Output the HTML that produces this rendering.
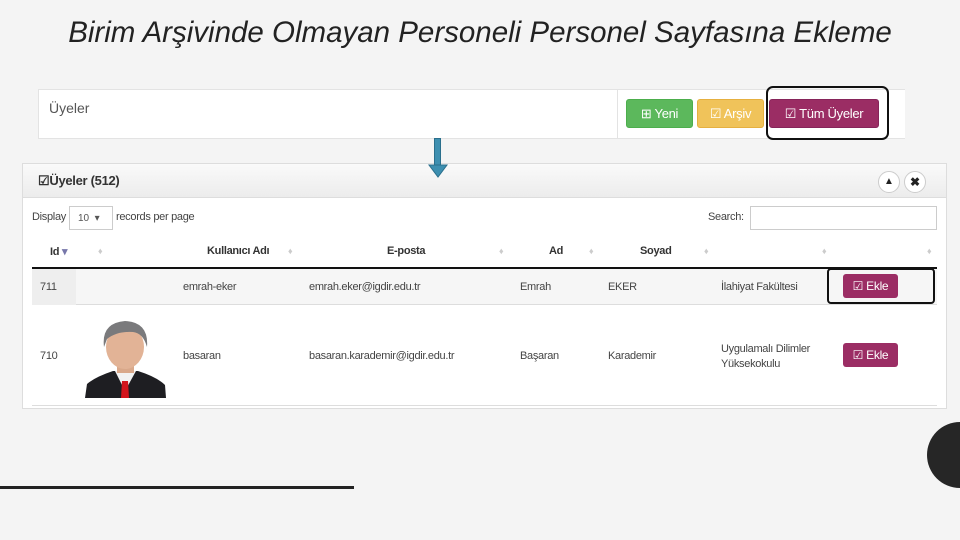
<!DOCTYPE html>
<html><head><meta charset="utf-8"><style>
*{margin:0;padding:0;box-sizing:border-box}
body{width:960px;height:540px;background:#f4f4f4;position:relative;overflow:hidden;font-family:"Liberation Sans",sans-serif;}
.a{position:absolute}
.title{left:0;width:960px;top:16px;text-align:center;font-size:29.5px;font-style:italic;color:#222;letter-spacing:0}
.btn{position:absolute;color:#fff;font-size:13px;border-radius:3px;display:flex;align-items:center;justify-content:center;letter-spacing:-0.3px}
.t{position:absolute;font-size:11px;color:#444;letter-spacing:-0.3px}
.h{position:absolute;font-size:11px;color:#333;font-weight:bold;letter-spacing:-0.3px}
.s{position:absolute;font-size:9px;color:#ccc}
</style></head><body>
<div class="a title">Birim Arşivinde Olmayan Personeli Personel Sayfasına Ekleme</div>

<div class="a" style="left:38px;top:89px;width:867px;height:50px;background:#fff;border-top:1px solid #e3e3e3;border-bottom:1px solid #e3e3e3"></div>
<div class="a" style="left:38px;top:89px;width:1px;height:50px;background:#e3e3e3"></div>
<div class="a" style="left:617px;top:89px;width:1px;height:50px;background:#e3e3e3"></div>
<div class="a" style="left:49px;top:100px;font-size:14px;color:#555">Üyeler</div>
<div class="btn" style="left:626px;top:99px;width:67px;height:29px;background:#5cb85c;border:1px solid #4cae4c">⊞ Yeni</div>
<div class="btn" style="left:697px;top:99px;width:67px;height:29px;background:#f0c35a;border:1px solid #e6b040">☑ Arşiv</div>
<div class="btn" style="left:769px;top:99px;width:110px;height:29px;background:#9b2d64;border:1px solid #86245a">☑ Tüm Üyeler</div>
<div class="a" style="left:766px;top:86px;width:123px;height:54px;border:2px solid #111;border-radius:7px"></div>

<div class="a" style="left:22px;top:163px;width:925px;height:246px;background:#fff;border:1px solid #ddd"></div>
<div class="a" style="left:23px;top:164px;width:923px;height:34px;background:linear-gradient(#fafafa,#ececec);border-bottom:1px solid #ddd"></div>
<div class="a" style="left:38px;top:173px;font-size:13px;color:#333;font-weight:bold;letter-spacing:-0.3px">☑Üyeler (512)</div>
<div class="a" style="left:878px;top:171px;width:22px;height:22px;border-radius:50%;border:1px solid #ccc;background:#fff;font-size:10px;text-align:center;line-height:20px;color:#222">▲</div>
<div class="a" style="left:904px;top:171px;width:22px;height:22px;border-radius:50%;border:1px solid #ccc;background:#fff;font-size:12px;font-weight:bold;text-align:center;line-height:20px;color:#222">✖</div>

<div class="a" style="left:434px;top:138px;width:7px;height:28px;background:#3d8fb0;border:1px solid #2a6f8c"></div>
<svg class="a" style="left:428px;top:164px" width="20" height="14"><polygon points="1,1 19,1 10,13" fill="#3d8fb0" stroke="#2a6f8c"/></svg>

<div class="t" style="left:32px;top:211px">Display</div>
<div class="a" style="left:69px;top:206px;width:44px;height:24px;border:1px solid #ccc;font-size:10px;color:#555;padding:6px 0 0 8px">10 &nbsp;▾</div>
<div class="t" style="left:116px;top:211px">records per page</div>
<div class="t" style="left:708px;top:211px">Search:</div>
<div class="a" style="left:750px;top:206px;width:187px;height:24px;border:1px solid #ccc"></div>

<div class="h" style="left:50px;top:245px">Id <span style="color:#77a">▾</span></div>
<div class="s" style="left:98px;top:246px">♦</div>
<div class="h" style="left:207px;top:245px">Kullanıcı Adı</div>
<div class="s" style="left:288px;top:246px">♦</div>
<div class="h" style="left:387px;top:245px">E-posta</div>
<div class="s" style="left:499px;top:246px">♦</div>
<div class="h" style="left:549px;top:245px">Ad</div>
<div class="s" style="left:589px;top:246px">♦</div>
<div class="h" style="left:640px;top:245px">Soyad</div>
<div class="s" style="left:704px;top:246px">♦</div>
<div class="s" style="left:822px;top:246px">♦</div>
<div class="s" style="left:927px;top:246px">♦</div>
<div class="a" style="left:32px;top:267px;width:905px;height:2px;background:#111"></div>

<div class="a" style="left:32px;top:269px;width:905px;height:36px;background:#f6f6f6;border-bottom:1px solid #ddd"></div>
<div class="a" style="left:32px;top:269px;width:44px;height:36px;background:#eee"></div>
<div class="t" style="left:40px;top:281px">711</div>
<div class="t" style="left:183px;top:281px">emrah-eker</div>
<div class="t" style="left:309px;top:281px">emrah.eker@igdir.edu.tr</div>
<div class="t" style="left:520px;top:281px">Emrah</div>
<div class="t" style="left:608px;top:281px">EKER</div>
<div class="t" style="left:721px;top:281px">İlahiyat Fakültesi</div>
<div class="btn" style="left:843px;top:274px;width:55px;height:24px;background:#9b2d64;font-size:12px">☑ Ekle</div>
<div class="a" style="left:827px;top:268px;width:108px;height:36px;border:2px solid #111;border-radius:4px"></div>

<div class="a" style="left:32px;top:306px;width:905px;height:100px;background:#fff;border-bottom:1px solid #ddd"></div>
<div class="t" style="left:40px;top:350px">710</div>
<svg class="a" style="left:85px;top:319px" width="81" height="79">
<rect width="81" height="79" fill="#fff"/>
<path d="M0 79 L2 65 Q10 58 28 52 L53 52 Q72 58 80 66 L81 79 Z" fill="#1e1e22"/>
<path d="M30 52 L40 72 L51 52 Z" fill="#f2f2f2"/>
<path d="M37 62 L43 62 L44 79 L36 79 Z" fill="#d2141c"/>
<rect x="32" y="40" width="17" height="14" fill="#d9a88a"/>
<ellipse cx="40" cy="28" rx="19" ry="22" fill="#e2b396"/>
<path d="M19 28 Q16 4 40 2 Q64 3 62 28 Q58 14 48 13 Q32 12 22 20 Z" fill="#7a7a7c"/>
</svg>
<div class="t" style="left:183px;top:350px">basaran</div>
<div class="t" style="left:309px;top:350px">basaran.karademir@igdir.edu.tr</div>
<div class="t" style="left:520px;top:350px">Başaran</div>
<div class="t" style="left:608px;top:350px">Karademir</div>
<div class="t" style="left:721px;top:342px;line-height:15px">Uygulamalı Dilimler<br>Yüksekokulu</div>
<div class="btn" style="left:843px;top:343px;width:55px;height:24px;background:#9b2d64;font-size:12px">☑ Ekle</div>

<div class="a" style="left:0;top:486px;width:354px;height:3px;background:#222"></div>
<div class="a" style="left:927px;top:422px;width:66px;height:66px;border-radius:50%;background:#262626"></div>
</body></html>
